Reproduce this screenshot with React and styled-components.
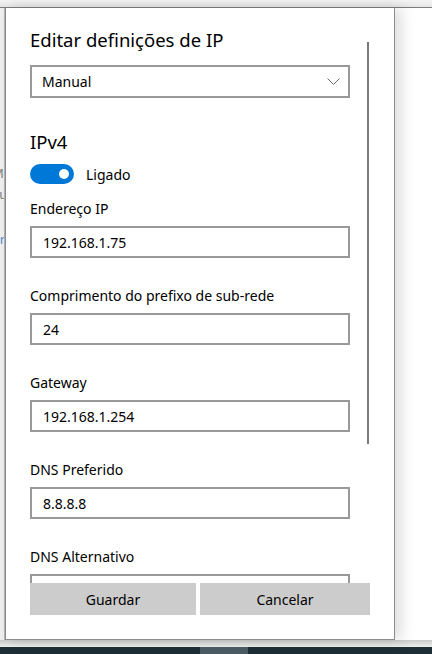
import React from 'react';
import styled, { createGlobalStyle } from 'styled-components';

const GlobalStyle = createGlobalStyle`
  html, body {
    margin: 0;
    padding: 0;
    background: #ffffff;
  }
  body {
    font-family: 'Noto Sans', 'Segoe UI', sans-serif;
    color: #000;
  }
`;

const Screen = styled.div`
  width: 432px;
  height: 654px;
  display: flex;
  flex-direction: column;
  overflow: hidden;
`;

const TopStrip = styled.div`
  height: 7px;
  background: linear-gradient(#f4f4f4, #e6e6e6);
  border-bottom: 1px solid #7d7d7d;
`;

const Middle = styled.div`
  display: flex;
  height: 632px;
  background: #ffffff;
`;

const BehindWindow = styled.div`
  width: 4px;
  background: #f0f0f0;
  border-right: 1px solid #b4b4b4;
  overflow: hidden;
  display: flex;
  flex-direction: column;
  font-size: 13px;
  line-height: 20px;
`;

const BehindLine = styled.div`
  white-space: nowrap;
  margin-left: -8px;
  margin-top: ${(p) => p.$top}px;
  color: ${(p) => (p.$link ? '#4a8fd0' : '#808080')};
`;

const Dialog = styled.div`
  width: 390px;
  box-sizing: border-box;
  border: 1px solid #8c8c8c;
  border-top: none;
  background: #fff;
  display: flex;
  flex-direction: column;
  box-shadow: 6px 0 14px rgba(0, 0, 0, 0.14);
  position: relative;
  z-index: 1;
`;

const Body = styled.div`
  flex: 1;
  min-height: 0;
  display: flex;
  align-items: flex-start;
  overflow: hidden;
`;

const Content = styled.div`
  width: 320px;
  padding-left: 24px;
  display: flex;
  flex-direction: column;
  flex-shrink: 0;
`;

const Title = styled.h1`
  margin: 18px 0 0 0;
  font-size: 18.5px;
  line-height: 28px;
  font-weight: 400;
`;

const SelectBox = styled.div`
  margin-top: 11px;
  height: 33px;
  box-sizing: border-box;
  border: 2px solid #999;
  display: flex;
  align-items: center;
  justify-content: space-between;
  padding: 0 8px 0 10px;
  font-size: 14px;
`;

const SectionTitle = styled.h2`
  margin: 30px 0 0 0;
  font-size: 18.5px;
  line-height: 28px;
  font-weight: 400;
`;

const ToggleRow = styled.div`
  display: flex;
  align-items: center;
  gap: 12px;
  margin-top: 8px;
  font-size: 14px;
`;

const Toggle = styled.div`
  width: 44px;
  height: 20px;
  border-radius: 10px;
  background: ${(p) => (p.$on ? '#0078d7' : '#fff')};
  display: flex;
  align-items: center;
  justify-content: ${(p) => (p.$on ? 'flex-end' : 'flex-start')};
  padding: 0 5px;
  box-sizing: border-box;
`;

const Knob = styled.div`
  width: 10px;
  height: 10px;
  border-radius: 50%;
  background: #fff;
`;

const Field = styled.div`
  display: flex;
  flex-direction: column;
  margin-top: ${(p) => p.$gap}px;
`;

const Label = styled.div`
  font-size: 14px;
  line-height: 20px;
`;

const Input = styled.div`
  margin-top: 7px;
  height: 32px;
  box-sizing: border-box;
  border: 2px solid #999;
  display: flex;
  align-items: center;
  padding-left: 11px;
  font-size: 14px;
`;

const Track = styled.div`
  margin-left: 17px;
  width: 2px;
  flex-shrink: 0;
`;

const Thumb = styled.div`
  margin-top: 34px;
  height: 402px;
  background: #7a7a7a;
`;

const Footer = styled.div`
  height: 56px;
  flex-shrink: 0;
  display: flex;
  gap: 4px;
  padding-left: 24px;
`;

const Button = styled.button`
  width: ${(p) => p.$w}px;
  height: 32px;
  border: none;
  background: #ccc;
  font-family: inherit;
  font-size: 14px;
  color: #000;
  padding: 0;
`;

const BottomStrip = styled.div`
  height: 7px;
  background: linear-gradient(#c9cbc9, #eef0ee);
`;

const Taskbar = styled.div`
  height: 7px;
  display: flex;
  background: #1e2e36;
`;

const TaskItem = styled.div`
  margin-left: 200px;
  width: 48px;
  background: #4b5c64;
`;

const Chevron = () => (
  <svg width="13" height="7" viewBox="0 0 13 7">
    <path d="M0.5 0.5 L6.5 6.5 L12.5 0.5" fill="none" stroke="#666" strokeWidth="1" />
  </svg>
);

const fields = [
  { label: 'Endereço IP', value: '192.168.1.75', gap: 15 },
  { label: 'Comprimento do prefixo de sub-rede', value: '24', gap: 28 },
  { label: 'Gateway', value: '192.168.1.254', gap: 28 },
  { label: 'DNS Preferido', value: '8.8.8.8', gap: 28 },
  { label: 'DNS Alternativo', value: '', gap: 28 },
];

export default function App() {
  return (
    <Screen>
      <GlobalStyle />
      <TopStrip />
      <Middle>
        <BehindWindow>
          <BehindLine $top={155}>Mode</BehindLine>
          <BehindLine $top={1}>Su</BehindLine>
          <BehindLine $top={25} $link>Pro</BehindLine>
        </BehindWindow>
        <Dialog>
          <Body>
            <Content>
              <Title>Editar definições de IP</Title>
              <SelectBox>
                <span>Manual</span>
                <Chevron />
              </SelectBox>
              <SectionTitle>IPv4</SectionTitle>
              <ToggleRow>
                <Toggle $on>
                  <Knob />
                </Toggle>
                Ligado
              </ToggleRow>
              {fields.map((f) => (
                <Field key={f.label} $gap={f.gap}>
                  <Label>{f.label}</Label>
                  <Input>{f.value}</Input>
                </Field>
              ))}
            </Content>
            <Track>
              <Thumb />
            </Track>
          </Body>
          <Footer>
            <Button $w={166}>Guardar</Button>
            <Button $w={170}>Cancelar</Button>
          </Footer>
        </Dialog>
      </Middle>
      <BottomStrip />
      <Taskbar>
        <TaskItem />
      </Taskbar>
    </Screen>
  );
}
